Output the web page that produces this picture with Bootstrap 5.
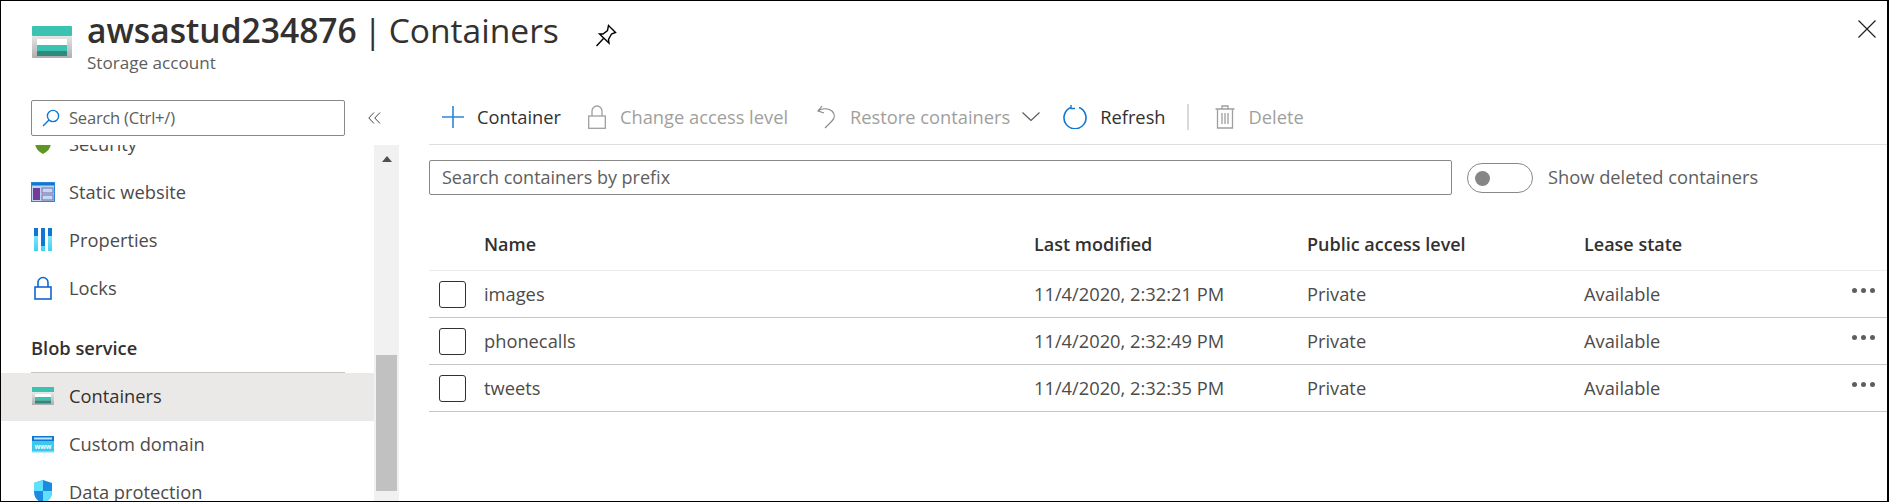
<!doctype html>
<html lang="en">
<head>
<meta charset="utf-8">
<title>awsastud234876 | Containers</title>
<link href="https://cdn.jsdelivr.net/npm/bootstrap@5.3.0/dist/css/bootstrap.min.css" rel="stylesheet">
<style>
html,body{height:502px;overflow:hidden;background:#fff}
body{font-family:"Open Sans","Noto Sans",sans-serif;font-size:18.3px;color:#444}
svg{display:block;flex:none}
.shell{height:502px;border:1px solid #000;border-right-width:2px;display:flex;flex-direction:column;overflow:hidden}
.head{height:99px;flex:none;padding:10px 11px 0 31px}
.head-text{margin-left:15px;margin-right:36px}
.page-title{font-size:33.6px;line-height:38px;margin:0;color:#323130;font-weight:400;white-space:nowrap;word-spacing:-2px}
.page-title b{font-weight:600}
.page-sub{font-size:17.1px;line-height:20px;color:#605e5c;margin-top:4px}
.store-mark{margin-top:15px}
.pin{margin-top:13px}
.close-x{margin-top:9px}
.body-wrap{flex:1;min-height:0;display:flex}
.side{width:398px;flex:none;display:flex;flex-direction:column;min-height:0}
.side-search{height:36px;width:314px;margin-left:30px;flex:none;border:1px solid #8a8886;border-radius:2px;padding-left:10px;gap:9px;color:#605e5c;font-size:16.6px;letter-spacing:-.25px}
.collapse-mark{width:54px;flex:none;height:36px;padding-left:23px}
.side-top{flex:none;height:45px}
.side-scroll{flex:1;min-height:0;overflow:hidden;display:flex}
.side-list{width:373px;flex:none;margin-top:-24px}
.side-row{height:48px;padding-left:30px;padding-bottom:2px;gap:14px;color:#4d4b49;white-space:nowrap}
.side-row .ic{width:24px;display:flex;justify-content:center}
.side-row.on{background:#ebe9e8;color:#323130}
.side-head{height:60px;margin:0 29px 0 30px;border-bottom:1px solid #c8c6c4;padding-top:25px;font-weight:600;color:#323130;line-height:20px}
.www{font:700 7px "Liberation Sans",sans-serif;fill:#fff}
.track{width:25px;flex:none;background:#f1f1f1;padding:11px 2px 0}
.arrow{width:0;height:0;border-left:5.5px solid transparent;border-right:5.5px solid transparent;border-bottom:6px solid #505050;margin:0 auto 193px}
.thumb{height:136px;background:#c1c1c1}
.main{flex:1;min-width:0;padding-left:30px}
.tools{height:45px;padding-bottom:11px;border-bottom:1px solid #e1dfdd;white-space:nowrap}
.tool{display:flex;align-items:center;color:#323130}
.tool.off{color:#a19f9d}
.tool-sep{width:2px;height:26px;background:#d9d9d9;margin-left:21px}
.t-add{margin-left:13px}.t-lock{margin-left:27px}.t-undo{margin-left:29px}.t-ref{margin-left:23px}.t-del{margin-left:26px}
.gap-a{margin-left:13px}.gap-b{margin-left:14px}.gap-c{margin-left:12px}
.filter-row{height:50px;padding-top:15px;align-items:flex-start;display:flex}
.filter{width:1023px;height:35px;border:1px solid #8a8886;border-radius:2px;padding-left:12px;line-height:33px;color:#605e5c;font-size:18px}
.switch-pill{width:66px;height:30px;border:1px solid #8a8886;border-radius:15px;margin:3px 15px 0 15px;padding-left:7px;flex:none}
.switch-dot{width:15px;height:15px;border-radius:50%;background:#868686}
.switch-text{line-height:34px;color:#605e5c}
.grid{table-layout:fixed;width:100%;margin:25px 0 0;color:#4d4b49;--bs-table-color:#4d4b49}
.grid th,.grid td{padding:0;vertical-align:middle;white-space:nowrap;border-bottom:1px solid #c8c6c4;height:47px}
.grid td{padding-top:1px}
.grid th{height:50px;font-weight:600;font-size:18px;color:#323130;border-bottom-color:#edebe9}
.w-c{width:55px}.w-n{width:550px}.w-m{width:273px}.w-p{width:277px}.w-l{width:265px}
.tick{width:27px;height:27px;border:1px solid #323130;border-radius:3px;margin-left:10px}
.dots{display:flex;gap:4px;margin-left:3px;margin-top:-6px}
.dots i{width:5px;height:5px;border-radius:50%;background:#605e5c}
</style>
</head>
<body>
<div class="shell">
  <header class="head d-flex align-items-start">
    <svg class="store-mark" width="40" height="32" viewBox="0 0 40 32">
      <defs><linearGradient id="g1" x1="0" y1="0" x2="0" y2="1"><stop offset="0" stop-color="#fff"/><stop offset="1" stop-color="#aeaeae"/></linearGradient></defs>
      <rect width="40" height="32" rx="1" fill="url(#g1)"/>
      <rect width="40" height="10" rx="1" fill="#3cc2b0"/>
      <rect x="5" y="13" width="30" height="6" fill="#fff"/>
      <rect x="5" y="19" width="30" height="6" fill="#3cc2b0"/>
      <rect x="5" y="25" width="30" height="5" fill="#2f8a7d"/>
    </svg>
    <div class="head-text">
      <h1 class="page-title"><b>awsastud234876</b> | Containers</h1>
      <div class="page-sub">Storage account</div>
    </div>
    <svg class="pin" width="22" height="24" viewBox="0 0 22 24" fill="none" stroke="#000" stroke-width="1.4">
      <path d="M13.5 1.5 20.5 8.5 16.5 10 13.5 15.5 14 19 4.5 10 8 10 12.5 6.5Z"/><path d="M8.500 14.500 1.500 22"/>
    </svg>
    <div class="flex-grow-1"></div>
    <svg class="close-x" width="18" height="18" viewBox="0 0 18 18" stroke="#222" stroke-width="1.2"><path d="M.5.500 17.500 17.500M17.500.500.500 17.500"/></svg>
  </header>
  <div class="body-wrap">
    <aside class="side">
      <div class="side-top d-flex">
        <div class="side-search d-flex align-items-center">
          <svg width="18" height="18" viewBox="0 0 18 18" fill="none" stroke="#0f78d4" stroke-width="1.4"><circle cx="11" cy="7" r="5.600"/><path d="M7 11 1 17"/></svg>
          <span>Search (Ctrl+/)</span>
        </div>
        <div class="collapse-mark d-flex align-items-center">
          <svg width="13" height="12" viewBox="0 0 13 12" fill="none" stroke="#444" stroke-width="1"><path d="M6 .5.800 6 6 11.500M12 .5 6.800 6 12 11.500"/></svg>
        </div>
      </div>
      <div class="side-scroll">
        <nav class="side-list">
          <div class="side-row d-flex align-items-center"><span class="ic"><svg width="20" height="20" viewBox="0 0 20 20"><path d="M10 20C4 17 2 13 2 8V3l8-3 8 3v5c0 5-2 9-8 12Z" fill="#5e9624"/></svg></span>Security</div>
          <div class="side-row d-flex align-items-center"><span class="ic"><svg width="24" height="20" viewBox="0 0 24 20"><rect width="24" height="20" fill="#bcd6ee"/><rect width="24" height="3.500" fill="#0f78d4"/><rect x=".5" y=".5" width="23" height="19" fill="none" stroke="#2c86d6"/><rect x="2" y="6" width="7" height="12" fill="#773a9c"/><rect x="11" y="6" width="11" height="5" fill="#c3d9ee" stroke="#7b6bb5"/><rect x="11" y="13" width="11" height="5" fill="#c3d9ee" stroke="#7b6bb5"/></svg></span>Static website</div>
          <div class="side-row d-flex align-items-center"><span class="ic"><svg width="18" height="24" viewBox="0 0 18 24"><defs><linearGradient id="g2" x1="0" y1="0" x2="0" y2="1"><stop offset="0" stop-color="#9ff0ff"/><stop offset="1" stop-color="#3fd0f2"/></linearGradient></defs><rect width="4" height="23" fill="url(#g2)"/><rect x="7" width="4" height="23" fill="url(#g2)"/><rect x="14" width="4" height="23" fill="url(#g2)"/><rect width="4" height="8" fill="#0f78d4"/><rect x="7" width="4" height="18" fill="#0f78d4"/><rect x="14" width="4" height="8" fill="#0f78d4"/></svg></span>Properties</div>
          <div class="side-row d-flex align-items-center"><span class="ic"><svg width="18" height="24" viewBox="0 0 18 24" fill="none" stroke="#0f63d8" stroke-width="1.600"><rect x="1" y="11" width="16" height="12" fill="#fff"/><path d="M4 11V6.500a5 5 0 0 1 10 0V11"/></svg></span>Locks</div>
          <div class="side-head">Blob service</div>
          <div class="side-row on d-flex align-items-center"><span class="ic"><svg width="22" height="18" viewBox="0 0 22 18"><defs><linearGradient id="g3" x1="0" y1="0" x2="0" y2="1"><stop offset="0" stop-color="#fff"/><stop offset="1" stop-color="#aeaeae"/></linearGradient></defs><rect width="22" height="18" fill="url(#g3)"/><rect width="22" height="5" fill="#3cc2b0"/><rect x="3" y="7" width="16" height="3" fill="#fff"/><rect x="3" y="10" width="16" height="3.500" fill="#3cc2b0"/><rect x="3" y="13.500" width="16" height="3" fill="#2f8a7d"/></svg></span>Containers</div>
          <div class="side-row d-flex align-items-center"><span class="ic"><svg width="22" height="17" viewBox="0 0 22 17"><rect width="22" height="17" fill="#3cc8ee"/><rect width="22" height="5" fill="#0f78d4"/><rect x="2" y="1.500" width="18" height="2" fill="#bfe7f8"/><rect y="15.500" width="22" height="1.500" fill="#bfeaf8"/><text class="www" x="11" y="13" text-anchor="middle">www</text></svg></span>Custom domain</div>
          <div class="side-row d-flex align-items-center"><span class="ic"><svg width="20" height="24" viewBox="0 0 20 24"><path d="M10 0 1 3v9c0 6 4 9 9 12 5-3 9-6 9-12V3Z" fill="#1b8be0"/><path d="M10 0v11H1V3ZM10 11h9v1c0 6-4 9-9 12Z" fill="#5ee0ff"/></svg></span>Data protection</div>
        </nav>
        <div class="track"><div class="arrow"></div><div class="thumb"></div></div>
      </div>
    </aside>
    <main class="main">
      <div class="tools d-flex align-items-center">
        <div class="tool t-add"><svg width="22" height="22" viewBox="0 0 22 22" stroke="#2b88d8" stroke-width="1.600"><path d="M11 0v22M0 11h22"/></svg><span class="gap-a">Container</span></div>
        <div class="tool off t-lock"><svg width="18" height="24" viewBox="0 0 18 24" fill="none" stroke="#a19f9d" stroke-width="1.300"><rect x=".7" y="11" width="16.600" height="12.300"/><path d="M4 11V6a5 5 0 0 1 10 0v5"/></svg><span class="gap-b">Change access level</span></div>
        <div class="tool off t-undo"><svg width="20" height="24" viewBox="0 0 20 24" fill="none" stroke="#8a8886" stroke-width="1.200"><path d="M5 1 1 6l6 2M1 6c4-3 10-3 14 0 3 3 3 7 0 10l-7 7"/></svg><span class="gap-a">Restore containers</span><svg class="gap-c" width="18" height="9" viewBox="0 0 18 9" fill="none" stroke="#605e5c" stroke-width="1.200"><path d="M.5.500 9 8.500 17.500.500"/></svg></div>
        <div class="tool t-ref"><svg width="24" height="24" viewBox="0 0 24 24" fill="none" stroke="#0f78d4" stroke-width="1.600"><path d="M8 2.500A11 11 0 1 0 16 2.500"/><path d="M8 0v4H12" transform="translate(0 -.500)" stroke-width="1.400"/></svg><span class="gap-a">Refresh</span></div>
        <div class="tool-sep"></div>
        <div class="tool off t-del"><svg width="20" height="24" viewBox="0 0 20 24" fill="none" stroke="#a19f9d" stroke-width="1.300"><path d="M.5 4h19M7 4V1h6v3M2.500 4v19h15V4M7 8v11M10 8v11M13 8v11"/></svg><span class="gap-b">Delete</span></div>
      </div>
      <div class="filter-row">
        <div class="filter">Search containers by prefix</div>
        <div class="switch-pill d-flex align-items-center"><div class="switch-dot"></div></div>
        <div class="switch-text">Show deleted containers</div>
      </div>
      <table class="table grid">
        <thead>
          <tr><th class="w-c"></th><th class="w-n">Name</th><th class="w-m">Last modified</th><th class="w-p">Public access level</th><th class="w-l">Lease state</th><th></th></tr>
        </thead>
        <tbody>
          <tr><td><div class="tick"></div></td><td>images</td><td>11/4/2020, 2:32:21 PM</td><td>Private</td><td>Available</td><td><div class="dots"><i></i><i></i><i></i></div></td></tr>
          <tr><td><div class="tick"></div></td><td>phonecalls</td><td>11/4/2020, 2:32:49 PM</td><td>Private</td><td>Available</td><td><div class="dots"><i></i><i></i><i></i></div></td></tr>
          <tr><td><div class="tick"></div></td><td>tweets</td><td>11/4/2020, 2:32:35 PM</td><td>Private</td><td>Available</td><td><div class="dots"><i></i><i></i><i></i></div></td></tr>
        </tbody>
      </table>
    </main>
  </div>
</div>
<script src="https://cdn.jsdelivr.net/npm/bootstrap@5.3.0/dist/js/bootstrap.bundle.min.js"></script>
</body>
</html>
